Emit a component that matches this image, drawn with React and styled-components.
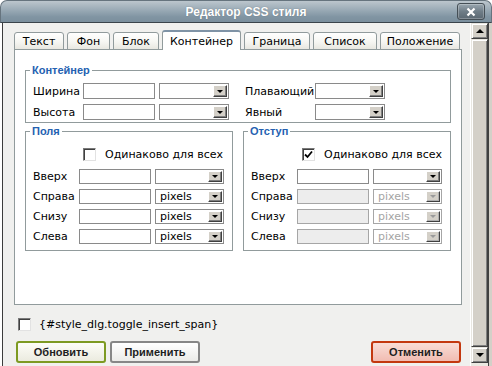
import React from 'react'
import styled, { createGlobalStyle, css } from 'styled-components'

const GlobalStyle = createGlobalStyle`
  html, body {
    margin: 0;
    padding: 0;
    background: #ffffff;
  }
  body {
    font-family: 'DejaVu Sans', Verdana, sans-serif;
    font-size: 11px;
    color: #000;
  }
`

const Window = styled.div`
  width: 492px;
  height: 366px;
  display: flex;
  flex-direction: column;
  overflow: hidden;
`

const TitleBar = styled.div`
  height: 23px;
  box-sizing: border-box;
  border: 1px solid #66747e;
  border-bottom-color: #3a444b;
  border-radius: 7px 7px 0 0;
  background: linear-gradient(#bcc6cd, #9cacb7 40%, #8195a3 75%, #7b8f9d);
  display: grid;
  grid-template-columns: 1fr auto 1fr;
  align-items: center;
`

const Title = styled.div`
  grid-column: 2;
  font-family: 'Liberation Sans', Arial, sans-serif;
  font-weight: bold;
  font-size: 12px;
  color: #ffffff;
  text-shadow: 0 0 1px rgba(60, 70, 80, 0.6);
`

const CloseBtn = styled.div`
  justify-self: end;
  margin-right: 6px;
  width: 28px;
  height: 17px;
  box-sizing: border-box;
  border: 1px solid #454f56;
  border-radius: 3px;
  background: linear-gradient(#9aa7b0, #6f7d87 50%, #5b6872);
  box-shadow: inset 0 0 0 1px rgba(255, 255, 255, 0.25);
  display: flex;
  align-items: center;
  justify-content: center;
`

const Body = styled.div`
  flex: 1;
  display: flex;
  margin-left: 2px;
  border-left: 1px solid #3c3c3c;
  min-height: 0;
`

const Content = styled.div`
  flex: 1;
  background: #f0f0ee;
  padding: 7px 8px 0 11px;
  display: flex;
  flex-direction: column;
`

const TabRow = styled.div`
  display: flex;
  align-items: flex-end;
  gap: 3px;
  height: 20px;
  margin-bottom: -1px;
  position: relative;
  z-index: 1;
`

const Tab = styled.div`
  width: ${p => p.$w}px;
  height: 18px;
  box-sizing: border-box;
  border: 1px solid #919b9c;
  border-radius: 3px 3px 0 0;
  background: linear-gradient(#ffffff, #f6f6f2 55%, #e8e7e0);
  display: flex;
  align-items: center;
  justify-content: center;
  padding-top: 1px;
  color: #000;
  ${p => p.$active && css`
    height: 20px;
    border-top: 2px solid #7f93a6;
    border-bottom: none;
    background: #ffffff;
    padding-top: 0;
  `}
`

const Panel = styled.div`
  width: 448px;
  height: 256px;
  box-sizing: border-box;
  border: 1px solid #919b9c;
  background: #ffffff;
  padding: 14px 10px 0 10px;
`

const Group = styled.fieldset`
  margin: 0;
  min-width: 0;
  border: 1px solid #919b9c;
  padding: ${p => p.$pad};
`

const Legend = styled.legend`
  padding: 0 2px;
  margin-left: -3px;
  font-family: 'Liberation Sans', Arial, sans-serif;
  font-weight: bold;
  font-size: 11px;
  line-height: 13px;
  color: #2461b1;
`

const Columns = styled.div`
  display: grid;
  grid-template-columns: 1fr 1fr;
  gap: 10px;
  margin-top: 2px;
`

const Row = styled.div`
  display: flex;
  align-items: center;
  gap: 4px;
  height: ${p => p.$h}px;
  & + & {
    margin-top: 5px;
  }
`

const Label = styled.span`
  width: ${p => p.$w}px;
  flex: none;
  white-space: nowrap;
  margin-left: ${p => p.$ml || 0}px;
`

const TextBox = styled.input`
  box-sizing: border-box;
  width: 72px;
  height: 100%;
  margin: 0;
  padding: 0 3px;
  border: 1px solid ${p => (p.disabled ? '#a6a6a6' : '#8a8a8a')};
  background: ${p => (p.disabled ? '#ededed' : '#ffffff')};
  font: inherit;
  outline: none;
`

const SelectBox = styled.div`
  box-sizing: border-box;
  width: 70px;
  height: 100%;
  border: 1px solid ${p => (p.$disabled ? '#a6a6a6' : '#8a8a8a')};
  background: #ffffff;
  display: flex;
  align-items: center;
  padding-left: 4px;
  color: ${p => (p.$disabled ? '#a4a4a4' : '#000')};
`

const SelectText = styled.span`
  flex: 1;
  line-height: 1;
`

const DropBtn = styled.span`
  width: 14px;
  height: calc(100% - 2px);
  margin-right: 1px;
  box-sizing: border-box;
  background: #d4d0c8;
  border: 1px solid;
  border-color: #ffffff #404040 #404040 #ffffff;
  box-shadow: inset -1px -1px ${p => (p.$disabled ? '#b0b0b0' : '#808080')};
  display: flex;
  align-items: flex-end;
  justify-content: center;
  padding-bottom: 3px;
`

const Arrow = styled.span`
  width: 0;
  height: 0;
  border-left: 3px solid transparent;
  border-right: 3px solid transparent;
  border-top: 3px solid ${p => (p.$disabled ? '#9a9a9a' : '#000')};
`

const CheckLine = styled.div`
  display: flex;
  align-items: center;
  gap: ${p => p.$gap}px;
  height: 16px;
  padding-left: ${p => p.$pl || 0}px;
  margin: ${p => p.$m || 0};
`

const Check = styled.span`
  width: 13px;
  height: 13px;
  flex: none;
  box-sizing: border-box;
  border: 1px solid;
  border-color: #7a7a7a #e2e2e2 #e2e2e2 #7a7a7a;
  box-shadow: inset 1px 1px #404040;
  background: #ffffff;
  display: flex;
  align-items: center;
  justify-content: center;
`

const Bottom = styled.div`
  display: flex;
  flex-direction: column;
`

const Buttons = styled.div`
  display: flex;
  gap: 4px;
  margin: 9px 1px 0 2px;
`

const Btn = styled.button`
  width: 90px;
  height: 22px;
  box-sizing: border-box;
  margin: 0;
  padding: 0;
  border: 2px solid ${p => p.$border};
  border-radius: 3px;
  background: ${p => p.$bg};
  font-family: 'Liberation Sans', Arial, sans-serif;
  font-weight: bold;
  font-size: 11px;
  color: #1e1e1e;
  margin-left: ${p => (p.$push ? 'auto' : '0')};
`

const Scrollbar = styled.div`
  width: 17px;
  flex: none;
  background: #ece9e2;
  display: flex;
  flex-direction: column;
  padding-bottom: 3px;
  margin-left: 1px;
`

const ScrollPart = styled.div`
  box-sizing: border-box;
  height: ${p => (p.$grow ? 'auto' : '16px')};
  flex: ${p => (p.$grow ? 1 : 'none')};
  background: #d4d0c8;
  border: 1px solid;
  border-color: #e8e6e0 #404040 #404040 #e8e6e0;
  box-shadow: inset 1px 1px #ffffff, inset -1px -1px #808080;
  display: flex;
  align-items: center;
  justify-content: center;
`

const ScrollArrow = styled.span`
  width: 0;
  height: 0;
  border-left: 4px solid transparent;
  border-right: 4px solid transparent;
  ${p => (p.$up
    ? css`border-bottom: 4px solid #000;`
    : css`border-top: 4px solid #000;`)}
`

const Frame = styled.div`
  width: 5px;
  flex: none;
  border-left: 1px solid #404040;
  background: #d4d0c8;
  box-sizing: border-box;
`

const tabs = [
  ['Текст', 50],
  ['Фон', 43],
  ['Блок', 46],
  ['Контейнер', 79],
  ['Граница', 66],
  ['Список', 64],
  ['Положение', 80],
]

const Select = ({ value = '', disabled }) => (
  <SelectBox $disabled={disabled}>
    <SelectText>{value}</SelectText>
    <DropBtn $disabled={disabled}>
      <Arrow $disabled={disabled} />
    </DropBtn>
  </SelectBox>
)

const Tick = () => (
  <svg width="9" height="9" viewBox="0 0 9 9">
    <path d="M1 4.5 L3.5 7 L8 1.5" fill="none" stroke="#000" strokeWidth="1.8" />
  </svg>
)

const Side = ({ title, same, disabled }) => (
  <Group $pad="8px 8px 6px 7px">
    <Legend>{title}</Legend>
    <CheckLine $gap={9} $pl={same ? 51 : 50} $m="0 0 7px">
      <Check>{same && <Tick />}</Check>
      <span>Одинаково для всех</span>
    </CheckLine>
    {['Вверх', 'Справа', 'Снизу', 'Слева'].map((name, i) => (
      <Row key={name} $h={15}>
        <Label $w={42}>{name}</Label>
        <TextBox disabled={disabled && i > 0} />
        <Select value={i > 0 ? 'pixels' : ''} disabled={disabled && i > 0} />
      </Row>
    ))}
  </Group>
)

export default function App() {
  return (
    <>
      <GlobalStyle />
      <Window>
        <TitleBar>
          <Title>Редактор CSS стиля</Title>
          <CloseBtn>
            <svg width="10" height="10" viewBox="0 0 10 10">
              <path d="M1.5 1.5 L8.5 8.5 M8.5 1.5 L1.5 8.5" stroke="#fff" strokeWidth="2.2" />
            </svg>
          </CloseBtn>
        </TitleBar>
        <Body>
          <Content>
            <TabRow>
              {tabs.map(([name, w]) => (
                <Tab key={name} $w={w} $active={name === 'Контейнер'}>{name}</Tab>
              ))}
            </TabRow>
            <Panel>
              <Group $pad="6px 7px 2px 7px">
                <Legend>Контейнер</Legend>
                <Row $h={16}>
                  <Label $w={46}>Ширина</Label>
                  <TextBox />
                  <Select />
                  <Label $w={66} $ml={12}>Плавающий</Label>
                  <Select />
                </Row>
                <Row $h={16}>
                  <Label $w={46}>Высота</Label>
                  <TextBox />
                  <Select />
                  <Label $w={66} $ml={12}>Явный</Label>
                  <Select />
                </Row>
              </Group>
              <Columns>
                <Side title="Поля" />
                <Side title="Отступ" same disabled />
              </Columns>
            </Panel>
            <Bottom>
              <CheckLine $gap={8} $pl={4} $m="11px 0 0">
                <Check />
                <span>{'{#style_dlg.toggle_insert_span}'}</span>
              </CheckLine>
              <Buttons>
                <Btn $border="#7d9a22" $bg="linear-gradient(#fdfdf8, #ebebdf)">Обновить</Btn>
                <Btn $border="#878787" $bg="linear-gradient(#ffffff, #ebebe8)">Применить</Btn>
                <Btn $push $border="#c3380f" $bg="linear-gradient(#f9ddd6, #f1bcb2)">Отменить</Btn>
              </Buttons>
            </Bottom>
          </Content>
          <Scrollbar>
            <ScrollPart><ScrollArrow $up /></ScrollPart>
            <ScrollPart $grow />
            <ScrollPart><ScrollArrow /></ScrollPart>
          </Scrollbar>
          <Frame />
        </Body>
      </Window>
    </>
  )
}
